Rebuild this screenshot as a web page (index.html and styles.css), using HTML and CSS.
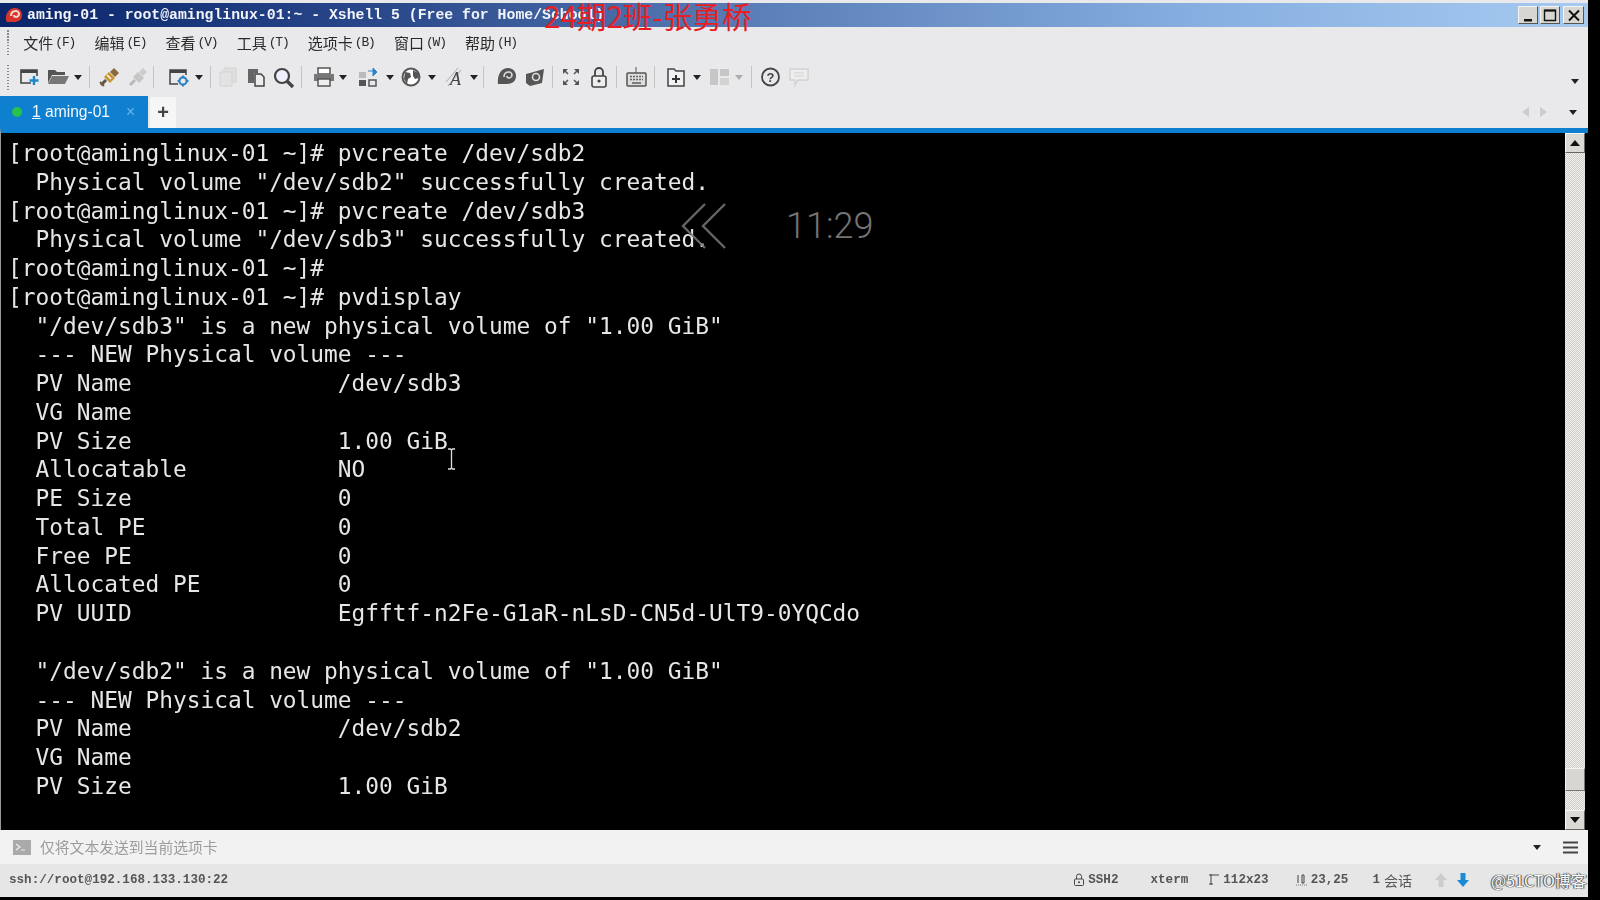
FILE: index.html
```html
<!DOCTYPE html>
<html lang="zh">
<head>
<meta charset="utf-8">
<title>Xshell 5</title>
<link rel="stylesheet" href="styles.css">
</head>
<body>
<div class="app">
  <header class="titlebar">
    <svg class="logo" width="19" height="18" viewBox="0 0 19 18"><path d="M2 14C1 8 5 2 11 2c4 0 7 3 7 7 0 5-4 7-8 7H3z" fill="#d8342c"/><path d="M7 10c0-3 2-5 5-5 2 0 3 2 3 3 0 2-2 3-3 3-1 0-2-1-2-2" fill="none" stroke="#f4d8d0" stroke-width="2"/></svg>
    <span class="title-text">aming-01 - root@aminglinux-01:~ - Xshell 5 (Free for Home/School)</span>
    <div class="winbtns">
      <button class="winbtn"><svg width="18" height="17" viewBox="0 0 18 17"><rect x="5" y="12" width="8" height="2.5" fill="#111"/></svg></button>
      <button class="winbtn"><svg width="18" height="17" viewBox="0 0 18 17"><path d="M3.5 3.5h11v10h-11z" fill="none" stroke="#111" stroke-width="1.4"/><path d="M3 3.5h12" stroke="#111" stroke-width="2"/></svg></button>
      <button class="winbtn close"><svg width="18" height="17" viewBox="0 0 18 17"><path d="M4 3.5l10 10M14 3.5l-10 10" stroke="#111" stroke-width="2"/></svg></button>
    </div>
  </header>

  <nav class="menubar">
    <i class="grip"></i>
    <span class="menu">文件<small>(F)</small></span>
    <span class="menu">编辑<small>(E)</small></span>
    <span class="menu">查看<small>(V)</small></span>
    <span class="menu">工具<small>(T)</small></span>
    <span class="menu">选项卡<small>(B)</small></span>
    <span class="menu">窗口<small>(W)</small></span>
    <span class="menu">帮助<small>(H)</small></span>
  </nav>

  <div class="toolbar">
    <i class="grip"></i>
    <svg class="ic g10" width="20" height="20" viewBox="0 0 20 20"><path d="M12 16H2V3h16v6" fill="none" stroke="#444" stroke-width="1.6"/><path d="M2 3h16v3H2z" fill="#444"/><path d="M15 9v9M10.500 13.500h9" stroke="#1b87cf" stroke-width="2.400"/></svg>
    <svg class="ic g8" width="22" height="20" viewBox="0 0 22 20"><path d="M1 3h7l2 2h8v3H5L1 16z" fill="#555"/><path d="M5 9h17l-4 8H1z" fill="#777"/></svg>
    <svg class="arr g5" width="8" height="5" viewBox="0 0 8 5"><path d="M0 0h8L4 5z" fill="#222"/></svg>
    <i class="sep g7"></i>
    <svg class="ic g9" width="21" height="20" viewBox="0 0 21 20"><path d="M2 18l5-5" stroke="#555" stroke-width="3"/><path d="M5 10l5-5 6 6-5 5z" fill="#c99436"/><path d="M8 8l4 4" stroke="#fff" stroke-width="1.500"/><path d="M11 5l4-4 5 5-4 4z" fill="#8a6a3a"/><path d="M1 15l4 4" stroke="#7a5a2a" stroke-width="2"/></svg>
    <svg class="ic g8 off" width="19" height="20" viewBox="0 0 19 20"><path d="M2 18l5-5" stroke="#aaa" stroke-width="3"/><path d="M5 10l5-5 6 6-5 5z" fill="#bbb"/><path d="M11 5l4-4 4 4-4 4z" fill="#c4c4c4"/></svg>
    <i class="sep g6"></i>
    <svg class="ic g14" width="21" height="20" viewBox="0 0 21 20"><path d="M10 17H2V3h16v5" fill="none" stroke="#444" stroke-width="1.500"/><path d="M2 3h16v3H2z" fill="#444"/><circle cx="15" cy="14" r="3.600" fill="none" stroke="#2b85c4" stroke-width="2.200"/><path d="M15 8.500v2M15 17.500v2M9.500 14h2M18.500 14h2" stroke="#2b85c4" stroke-width="2"/></svg>
    <svg class="arr g6" width="8" height="5" viewBox="0 0 8 5"><path d="M0 0h8L4 5z" fill="#222"/></svg>
    <i class="sep g7"></i>
    <svg class="ic g8 off" width="18" height="20" viewBox="0 0 18 20"><path d="M5 1h12v14H5z" fill="#ddd" stroke="#ccc"/><path d="M1 5h12v14H1z" fill="#e2e2e2" stroke="#ccc"/></svg>
    <svg class="ic g10" width="18" height="20" viewBox="0 0 18 20"><path d="M1 2h10v4H7v10H1z" fill="#666"/><path d="M8 7h6l3 3v9H8z" fill="#eee" stroke="#444" stroke-width="1.500"/></svg>
    <svg class="ic g8" width="22" height="21" viewBox="0 0 22 21"><circle cx="9" cy="9" r="7" fill="#eef" stroke="#444" stroke-width="2.200"/><path d="M14 14l6 6" stroke="#444" stroke-width="3.400"/></svg>
    <i class="sep g6"></i>
    <svg class="ic g11" width="22" height="20" viewBox="0 0 22 20"><path d="M5 1h12v6H5z" fill="#fff" stroke="#555" stroke-width="1.500"/><path d="M1 7h20v7H1z" fill="#777"/><path d="M5 12h12v7H5z" fill="#eee" stroke="#555" stroke-width="1.500"/></svg>
    <svg class="arr g4" width="8" height="5" viewBox="0 0 8 5"><path d="M0 0h8L4 5z" fill="#222"/></svg>
    <svg class="ic g11" width="20" height="20" viewBox="0 0 20 20"><path d="M1 5h7v6H1z" fill="#bbb"/><path d="M1 13h7v6H1z" fill="#555"/><path d="M11 13h7v6h-7z" fill="none" stroke="#555" stroke-width="1.500"/><path d="M10 4h5M15 1v8l4-4z" fill="#2b85c4" stroke="#2b85c4"/></svg>
    <svg class="arr g8" width="8" height="5" viewBox="0 0 8 5"><path d="M0 0h8L4 5z" fill="#222"/></svg>
    <svg class="ic g7" width="20" height="20" viewBox="0 0 20 20"><circle cx="10" cy="10" r="8.500" fill="#fff" stroke="#555" stroke-width="2"/><path d="M4 5l5 1 1 4-3 2-1 5-3-5zM12 3l5 3 1 5-4 1-2-3z" fill="#555"/></svg>
    <svg class="arr g7" width="8" height="5" viewBox="0 0 8 5"><path d="M0 0h8L4 5z" fill="#222"/></svg>
    <svg class="ic g9 font-ic" width="20" height="20" viewBox="0 0 20 20"><path d="M1 15L13 1M3 19L16 3" stroke="#aaa" stroke-width="1"/><text x="5" y="18" class="font-a">A</text></svg>
    <svg class="arr g5" width="8" height="5" viewBox="0 0 8 5"><path d="M0 0h8L4 5z" fill="#222"/></svg>
    <i class="sep g5"></i>
    <svg class="ic g13" width="20" height="20" viewBox="0 0 20 20"><path d="M1 17C0 8 4 1 11 1c5 0 8 4 8 8 0 6-5 8-9 8z" fill="#555"/><path d="M7 10c0-3 2-5 5-5 2 0 3 2 3 3 0 2-2 3-3 3-1 0-2-1-2-2" fill="none" stroke="#ddd" stroke-width="1.600"/></svg>
    <svg class="ic g8" width="20" height="20" viewBox="0 0 20 20"><path d="M1 7l4-1 14-4-2 14-12 3-4-3z" fill="#555"/><circle cx="11" cy="10" r="3.500" fill="none" stroke="#ddd" stroke-width="1.600"/></svg>
    <i class="sep g7"></i>
    <svg class="ic g9" width="18" height="20" viewBox="0 0 18 20"><path d="M1 7V2h5zM17 7V2h-5zM1 13v5h5zM17 13v5h-5z" fill="#555"/><path d="M3 4l3 3M15 4l-3 3M3 16l3-3M15 16l-3-3" stroke="#555" stroke-width="1.500"/></svg>
    <svg class="ic g11" width="16" height="21" viewBox="0 0 16 21"><path d="M4 9V5a4 4 0 0 1 8 0v4" fill="none" stroke="#444" stroke-width="1.800"/><rect x="1" y="9" width="14" height="11" rx="2" fill="#eee" stroke="#444" stroke-width="1.600"/><circle cx="8" cy="14" r="1.600" fill="#444"/></svg>
    <i class="sep g9"></i>
    <svg class="ic g9" width="21" height="20" viewBox="0 0 21 20"><path d="M10 0v6" stroke="#555"/><rect x="1" y="6" width="19" height="13" rx="1" fill="#ddd" stroke="#555" stroke-width="1.500"/><path d="M4 9.500h13M4 12.500h13" stroke="#666" stroke-width="1.600" stroke-dasharray="2 1"/><path d="M6 16h9" stroke="#666" stroke-width="1.600"/></svg>
    <i class="sep g7"></i>
    <svg class="ic g12" width="18" height="20" viewBox="0 0 18 20"><path d="M1 2h6l2 2h8v15H1z" fill="#f2f2f2" stroke="#444" stroke-width="1.500"/><path d="M9 8v8M5 12h8" stroke="#333" stroke-width="2"/></svg>
    <svg class="arr g8" width="8" height="5" viewBox="0 0 8 5"><path d="M0 0h8L4 5z" fill="#222"/></svg>
    <svg class="ic g9 off" width="19" height="18" viewBox="0 0 19 18"><path d="M0 1h8v16H0zM10 1h9v7h-9z" fill="#bbb"/><path d="M10 10h9v7h-9z" fill="#ccc"/></svg>
    <svg class="arr g6 off" width="8" height="5" viewBox="0 0 8 5"><path d="M0 0h8L4 5z" fill="#999"/></svg>
    <i class="sep g8"></i>
    <svg class="ic g9" width="19" height="20" viewBox="0 0 19 20"><circle cx="9.500" cy="10" r="8.500" fill="none" stroke="#444" stroke-width="1.800"/><text x="9.500" y="15" class="help-q">?</text></svg>
    <svg class="ic g9 off" width="20" height="20" viewBox="0 0 20 20"><path d="M1 2h18v11H9l-3 5v-5H1z" fill="#f0f0f0" stroke="#ccc" stroke-width="1.500"/><path d="M5 6h10M5 9h10" stroke="#ccc"/></svg>
    <svg class="arr end" width="8" height="5" viewBox="0 0 8 5"><path d="M0 0h8L4 5z" fill="#222"/></svg>
  </div>

  <div class="tabbar">
    <div class="tab"><i class="dot"></i><span><u>1</u> aming-01</span><b class="tab-x">×</b></div>
    <div class="tab-add">+</div>
    <div class="tab-nav">
      <svg width="7" height="10" viewBox="0 0 7 10"><path d="M7 0v10L0 5z" fill="#ccc"/></svg>
      <svg width="7" height="10" viewBox="0 0 7 10"><path d="M0 0v10l7-5z" fill="#ccc"/></svg>
      <svg class="tab-drop" width="8" height="5" viewBox="0 0 8 5"><path d="M0 0h8L4 5z" fill="#222"/></svg>
    </div>
  </div>

  <main class="term-wrap">
<pre class="term">[root@aminglinux-01 ~]# pvcreate /dev/sdb2
  Physical volume "/dev/sdb2" successfully created.
[root@aminglinux-01 ~]# pvcreate /dev/sdb3
  Physical volume "/dev/sdb3" successfully created.
[root@aminglinux-01 ~]#
[root@aminglinux-01 ~]# pvdisplay
  "/dev/sdb3" is a new physical volume of "1.00 GiB"
  --- NEW Physical volume ---
  PV Name               /dev/sdb3
  VG Name
  PV Size               1.00 GiB
  Allocatable           NO
  PE Size               0
  Total PE              0
  Free PE               0
  Allocated PE          0
  PV UUID               Egfftf-n2Fe-G1aR-nLsD-CN5d-UlT9-0YQCdo

  "/dev/sdb2" is a new physical volume of "1.00 GiB"
  --- NEW Physical volume ---
  PV Name               /dev/sdb2
  VG Name
  PV Size               1.00 GiB</pre>
    <div class="scrollbar">
      <div class="sb-btn"><svg width="10" height="6" viewBox="0 0 10 6"><path d="M5 0l5 6H0z" fill="#111"/></svg></div>
      <div class="sb-track"><div class="sb-thumb"></div></div>
      <div class="sb-btn"><svg width="10" height="6" viewBox="0 0 10 6"><path d="M0 0h10L5 6z" fill="#111"/></svg></div>
    </div>
  </main>

  <div class="inputbar">
    <svg width="18" height="15" viewBox="0 0 18 15"><rect width="18" height="15" fill="#aaa"/><path d="M3 4l4 3-4 3" fill="none" stroke="#eee" stroke-width="1.200"/><path d="M8 10h4" stroke="#eee"/></svg>
    <span class="input-text">仅将文本发送到当前选项卡</span>
    <svg class="input-drop" width="8" height="5" viewBox="0 0 8 5"><path d="M0 0h8L4 5z" fill="#222"/></svg>
    <svg class="burger" width="15" height="13" viewBox="0 0 15 13"><path d="M0 1.500h15M0 6.500h15M0 11.500h15" stroke="#444" stroke-width="2.200"/></svg>
  </div>

  <footer class="statusbar">
    <span class="addr">ssh://root@192.168.133.130:22</span>
    <div class="status-right">
      <span class="st st-ssh"><svg width="10" height="13" viewBox="0 0 10 13"><path d="M2.500 6V3.500a2.500 2.500 0 0 1 5 0V6" fill="none" stroke="#444"/><rect x="0.500" y="6" width="9" height="6.500" rx="1" fill="none" stroke="#444"/><circle cx="5" cy="9.200" r="1" fill="#444"/></svg>SSH2</span>
      <span class="st st-term">xterm</span>
      <span class="st st-size"><svg width="11" height="13" viewBox="0 0 11 13"><path d="M3 1v11M1 2h4M1 11h4M5 2h6" stroke="#444" fill="none"/></svg>112x23</span>
      <span class="st st-pos"><svg width="11" height="13" viewBox="0 0 11 13"><path d="M2 2v8M6 2h2v8H6z" stroke="#444" fill="none"/><path d="M0 12h11" stroke="#777" stroke-dasharray="1 1"/></svg>23,25</span>
      <span class="st st-sess">1 <em>会话</em></span>
      <span class="st st-arrows">
        <svg width="12" height="14" viewBox="0 0 12 14"><path d="M6 0l6 7H8.500v7h-5V7H0z" fill="#ccc"/></svg>
        <svg width="12" height="14" viewBox="0 0 12 14"><path d="M6 14L0 7h3.500V0h5v7H12z" fill="#1b8ad6"/></svg>
      </span>
    </div>
  </footer>
</div>

<div class="stamp">24期2班-张勇桥</div>
<svg class="osd-arrows" width="45" height="46" viewBox="0 0 45 46"><path d="M24 1L2 23l22 22M44 1L22 23l22 22" fill="none" stroke="#777" stroke-width="2.400" stroke-opacity="0.85"/></svg>
<div class="osd-time">11:29</div>
<svg class="ibeam" width="9" height="22" viewBox="0 0 9 22"><path d="M1 1h2.500l1 1 1-1H8M4.500 2v18M1 21h2.500l1-1 1 1H8" fill="none" stroke="#ddd" stroke-width="1.300"/></svg>
<div class="watermark">@51CTO博客</div>
</body>
</html>
```

FILE: styles.css
```css
* { box-sizing: border-box; }
html, body { margin: 0; padding: 0; height: 900px; overflow: hidden; background: #000; }
body { position: relative; font-family: "Noto Sans CJK SC", "Liberation Sans", sans-serif; }

.app {
  width: 1588px; height: 897px; padding-top: 3px;
  background: #e9e8ea; display: flex; flex-direction: column;
  filter: blur(0.35px);
}

.titlebar {
  height: 24px; display: flex; align-items: center; padding-left: 4px;
  background: linear-gradient(90deg, #0a246a 0%, #2b4a8c 25%, #5b7fb8 48%, #86aee0 75%, #a6caf0 100%);
  flex: none;
}
.logo { flex: none; }
.title-text {
  margin-left: 4px; color: #f2f4fa; font: bold 14.8px "Liberation Mono", monospace; white-space: pre;
}
.winbtns { margin-left: auto; margin-right: 4px; display: flex; gap: 2px; }
.winbtn {
  width: 20px; height: 18px; padding: 0; border: 1px solid; border-color: #f4f4f4 #555 #555 #f4f4f4;
  background: #d8d6d0; display: flex; align-items: center; justify-content: center;
}
.winbtn.close { width: 21px; margin-left: 1px; }

.grip {
  width: 2px; height: 25px; flex: none;
  background: repeating-linear-gradient(180deg, #888 0 1.500px, transparent 1.500px 3px);
}
.menubar {
  height: 31px; display: flex; align-items: center; padding-left: 7px; gap: 19.300px; flex: none;
  font-size: 15px; color: #2a2a2a;
}
.menu { display: flex; align-items: center; white-space: nowrap; gap: 2px; line-height: 1; }
.menu small { font: 13px "Liberation Mono", monospace; letter-spacing: -1.200px; }
.grip + .menu { margin-left: -5px; }

.toolbar { height: 38px; display: flex; align-items: center; padding-left: 7px; flex: none; }
.ic, .arr { flex: none; }
.sep { width: 1px; height: 22px; background: #c4c4c4; flex: none; }
.off { opacity: 0.75; }
.g4 { margin-left: 4px; } .g5 { margin-left: 5px; } .g6 { margin-left: 6px; }
.g7 { margin-left: 7px; } .g8 { margin-left: 8px; } .g9 { margin-left: 9px; }
.g10 { margin-left: 10px; } .g11 { margin-left: 11px; } .g12 { margin-left: 12px; }
.g13 { margin-left: 13px; } .g14 { margin-left: 14px; }
.end { margin-left: auto; margin-right: 9px; margin-top: 8px; }
.font-ic { overflow: visible; }
.font-a { font: italic 18px "Liberation Serif", serif; fill: #444; }
.help-q { font: bold 13px "Liberation Sans", sans-serif; fill: #444; text-anchor: middle; }

.tabbar { height: 32px; display: flex; align-items: stretch; flex: none; }
.tab {
  width: 148px; background: #0f7fcf; color: #f4f8fc; display: flex; align-items: center;
  font: 15.600px "Liberation Sans", sans-serif; padding-left: 12px;
}
.dot { width: 10px; height: 10px; border-radius: 50%; background: #27c24c; margin-right: 10px; }
.tab-x { margin-left: auto; margin-right: 13px; font-weight: normal; color: #6fb4e4; }
.tab-add {
  width: 26px; margin-left: 2px; margin-top: 1px; background: #f6f6f6; display: flex; align-items: center; justify-content: center;
  font: bold 20px "Liberation Sans", sans-serif; color: #444;
}
.tab-nav { margin-left: auto; display: flex; align-items: center; gap: 11px; padding-right: 11px; }
.tab-drop { margin-left: 11px; }

.term-wrap {
  height: 702px; flex: none; display: flex; border-top: 5px solid #0f7fcf; background: #000;
  border-left: 1px solid #999;
}
.term {
  margin: 0; flex: 1; padding: 6px 0 0 7px; overflow: hidden; color: #e6e6e6;
  font: 22.830px/28.760px "DejaVu Sans Mono", monospace;
}
.scrollbar { width: 20px; margin-right: 3px; display: flex; flex-direction: column; }
.sb-btn {
  height: 20px; flex: none; background: #dcdad4; border: 1px solid; border-color: #f6f6f6 #666 #666 #f6f6f6;
  display: flex; align-items: center; justify-content: center;
}
.sb-track {
  flex: 1; display: flex; flex-direction: column; justify-content: flex-end; padding-bottom: 19px;
  background: repeating-conic-gradient(#cfcdc8 0 25%, #f2f1ee 0 50%) 0 0 / 2px 2px;
}
.sb-thumb { height: 23px; background: #d8d6d0; border: 1px solid; border-color: #f4f4f4 #777 #777 #f4f4f4; }

.inputbar {
  height: 34px; flex: none; display: flex; align-items: center; padding-left: 13px; background: #f2f2f3;
}
.input-text { margin-left: 9px; font-size: 14.800px; line-height: 1; color: #9c9c9c; }
.input-drop { margin-left: auto; }
.burger { margin-left: 22px; margin-right: 10px; }

.statusbar {
  flex: 1; display: flex; align-items: center; padding-left: 9px; padding-bottom: 2px; background: #e6e6e6;
  font: bold 12.600px "Liberation Mono", monospace; color: #555;
}
.status-right { margin-left: auto; display: flex; align-items: center; }
.st { display: flex; align-items: center; gap: 4px; white-space: nowrap; }
.st-term { margin-left: 32px; }
.st-size { margin-left: 20px; }
.st-pos { margin-left: 27px; }
.st-sess { margin-left: 24px; }
.st-sess em { font: normal 14px/1 "Noto Sans CJK SC", sans-serif; }
.st-arrows { margin-left: 23px; gap: 10px; margin-right: 119px; }

.stamp {
  position: absolute; left: 544px; top: 1px; font: 29.600px/30px "Noto Sans CJK SC", sans-serif; color: #e81e25; white-space: nowrap;
}
.osd-arrows { position: absolute; left: 681px; top: 203px; }
.osd-time {
  position: absolute; left: 786px; top: 205px; font: 300 36px/42px "Roboto", sans-serif; color: #747474;
}
.ibeam { position: absolute; left: 447px; top: 448px; }
.watermark {
  position: absolute; left: 1491px; top: 869px; font: 16px/22px "Noto Sans CJK SC", sans-serif; color: #fafafa;
  text-shadow: 0 0 1px #444, 1px 0 1px #444, -1px 0 1px #444; white-space: nowrap;
}
```
